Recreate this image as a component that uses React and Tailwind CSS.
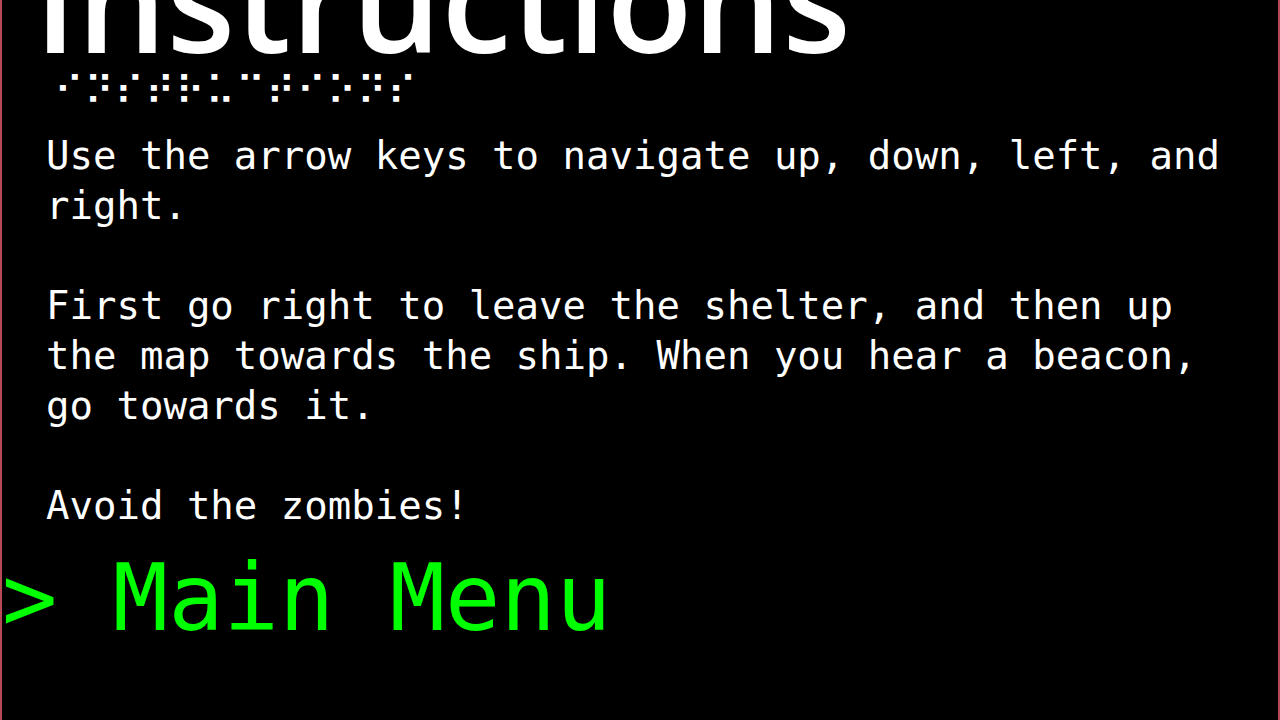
export default function App() {
  const paragraphs = [
    "Use the arrow keys to navigate up, down, left, and right.",
    "First go right to leave the shelter, and then up the map towards the ship. When you hear a beacon, go towards it.",
    "Avoid the zombies!",
  ];

  return (
    <div className="w-[1280px] h-[720px] overflow-hidden bg-black border-x-2 border-[#b84a58] text-white">
      {/* Title */}
      <h1 className="pl-[32px] mt-[-72px] h-[130px] text-[141px] leading-none font-semibold font-['Open_Sans',sans-serif]">
        Instructions
      </h1>
      <div className="pl-[52px] mt-[13px] h-[40px] text-[40px] leading-[40px] tracking-[1px] font-['DejaVu_Sans',sans-serif]">
        ⠊⠝⠎⠞⠗⠥⠉⠞⠊⠕⠝⠎
      </div>

      {/* Body */}
      <div className="pl-[44px] pr-[40px] mt-[20px] flex flex-col gap-[50px] text-[39px] leading-[50px] font-['DejaVu_Sans_Mono',monospace]">
        {paragraphs.map((p) => (
          <p key={p}>{p}</p>
        ))}
      </div>

      {/* Menu */}
      <div className="mt-[18px] text-[92px] leading-[100px] text-[#00ff00] whitespace-pre font-['DejaVu_Sans_Mono',monospace]">
        {"> Main Menu"}
      </div>
    </div>
  );
}
